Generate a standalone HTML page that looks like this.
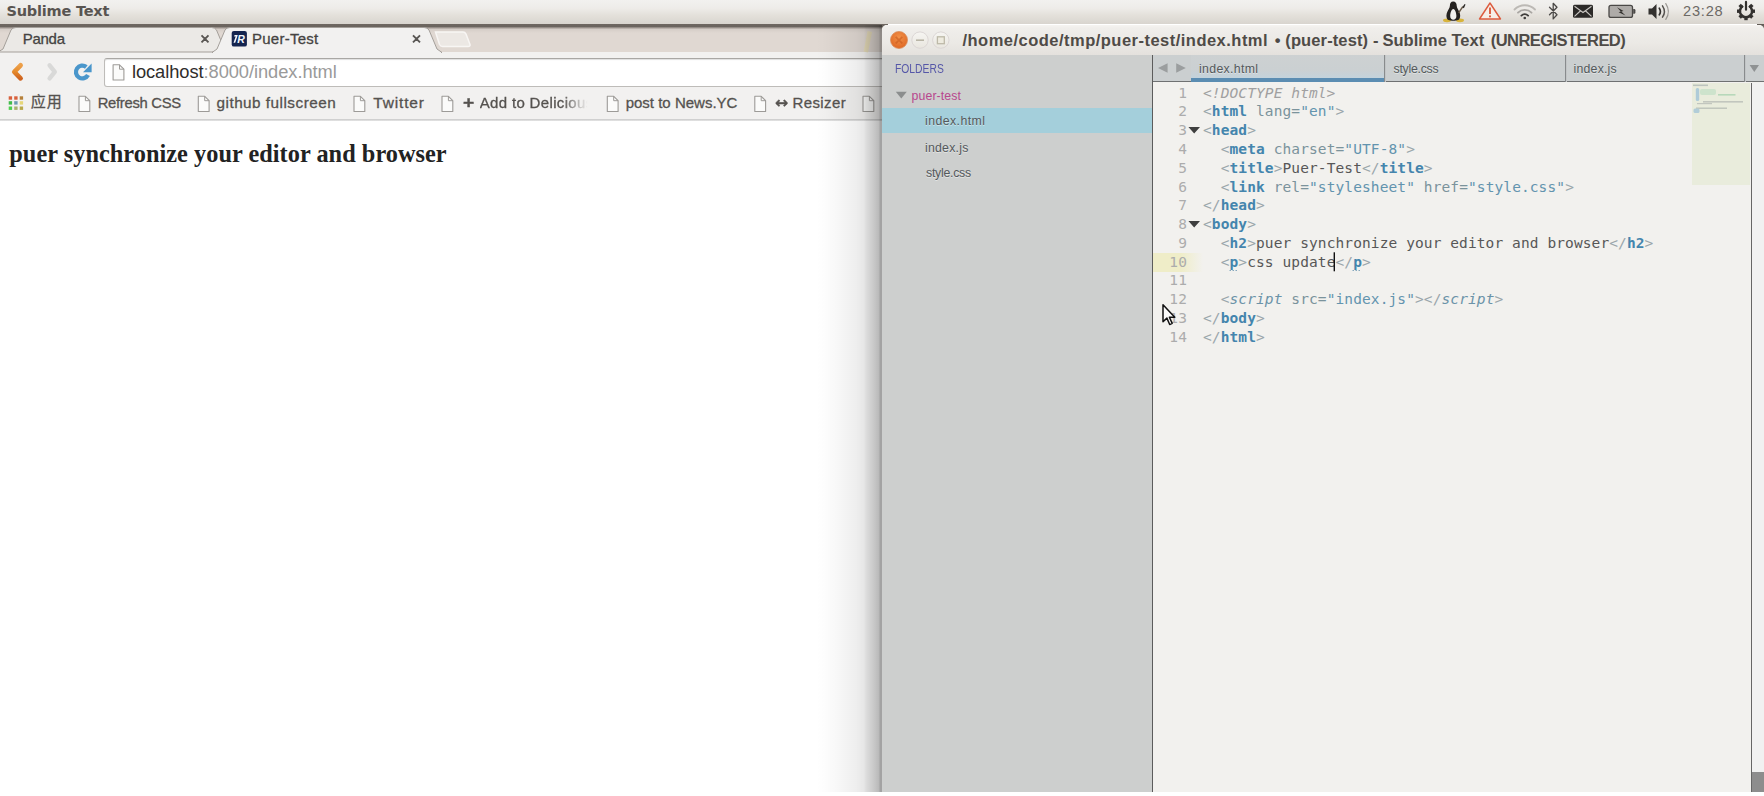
<!DOCTYPE html>
<html lang="en">
<head>
<meta charset="UTF-8">
<title>Puer-Test</title>
<style>
*{box-sizing:border-box;margin:0;padding:0}
html,body{width:1764px;height:796px;overflow:hidden;background:#fff}
body{position:relative;font-family:"Liberation Sans","Noto Sans CJK SC",sans-serif;color:#3c3c3c}
.abs{position:absolute}
svg{position:absolute;overflow:visible}
/* top panel */
#panel{left:0;top:0;width:1764px;height:24.3px;background:linear-gradient(#f2f1ef 0,#eeece9 8px,#e4e1db 15px,#d8d4ce 24.3px)}
/* chrome */
#chrome{left:0;top:25px;width:888px;height:771px;background:#fff}
#tabstrip{left:0;top:-1px;width:888px;height:28px;background:linear-gradient(#6e6761 0,#6b645e 2.6px,#a89f99 3.9px,#d6cec8 5.4px,#e0d8d2 9px,#e0d8d2 100%)}
#toolbar{left:0;top:27px;width:882px;height:67px;background:#f2f1f0}
#tbline{left:0;top:93.6px;width:882px;height:2px;background:linear-gradient(#c9c9c9,#e6e6e6)}
#urlbox{left:104px;top:33px;width:790px;height:29px;background:#fff;border:1px solid #bebcb9;border-top-color:#a9a7a4;border-radius:3px;box-shadow:inset 0 1px 1px rgba(0,0,0,.13)}
#txt div,#txt h2{position:absolute;white-space:nowrap;transform-origin:0 0}
#url span{color:#9a9a9a}
/* shadow */
#shadow{left:816px;top:25px;width:66px;height:767px;background:linear-gradient(to right,rgba(0,0,0,0) 0,rgba(0,0,0,.008) 8px,rgba(0,0,0,.027) 20px,rgba(0,0,0,.067) 40px,rgba(0,0,0,.098) 48px,rgba(0,0,0,.135) 50px,rgba(0,0,0,.215) 58px,rgba(0,0,0,.273) 63px,rgba(0,0,0,.36) 64px,rgba(0,0,0,.36) 66px)}
/* sublime */
#subl{left:882px;top:24.5px;width:882px;height:767.5px;background:#f2f1ee;border-radius:5px 5px 0 0;overflow:hidden}
#sin{left:0;top:.5px;width:882px;height:767px}
#titlebar{left:0;top:-.5px;width:882px;height:30.5px;background:linear-gradient(#f6f4f1 0,#f0eeeb 3px,#ebe9e5 18px,#e4e1dd 100%)}
#sidebar{left:0;top:30px;width:270px;height:737px;background:#cdcfce}
#sidediv{left:270px;top:30px;width:1px;height:737px;background:#5c5c5c}
#sel{left:0;top:83px;width:270px;height:25px;background:#a4cfdb}
#tabbar{left:271px;top:30px;width:611px;height:27px;background:#cbcfd0;border-bottom:1px solid #6f7172}
#acttab{left:309px;top:30px;width:193px;height:27px;background:linear-gradient(#cdd1d2 0,#cbd0d2 55%,#bfd4e1 100%)}
#actline{left:309px;top:53px;width:193px;height:4px;background:#5b8db2}
.tdiv{top:30px;width:2px;height:27px;background:linear-gradient(to right,#6b6e70,#dfe2e3)}
#editor{left:271px;top:58px;width:611px;height:709px;background:#f2f1ee}
#code{--lh:18.77px;left:0;top:0.7px;font:14.5px/18.77px "DejaVu Sans Mono","Liberation Mono",monospace;color:#575757;white-space:pre;letter-spacing:0.1px}
.ln{position:absolute;left:0;width:34px;text-align:right;color:#acacac;height:18.77px}
.cl{position:absolute;left:50px;height:18.77px}
.p{color:#9aa6ab}
.t{color:#4485ad;font-weight:bold}
.a{color:#7b939c}
.s{color:#6394ae}
.c{color:#a0a0a0;font-style:italic}
.i{font-style:italic;font-weight:normal;color:#6b93a8}
#curln{left:0;top:170.3px;width:50px;height:18.7px;background:linear-gradient(to right,#efedc8 0,#efedc8 55%,#f2f1ee 100%)}
#minimap{left:539px;top:0;width:58px;height:102px;background:#e9ecdc}
#sbar{left:869px;top:58px;width:13px;height:709px;background:#f1f1f1;border-left:1px solid #666}
#thumb{left:870px;top:747px;width:12px;height:20px;background:#8d8d8d}
</style>
</head>
<body>
<!-- ================= Chrome window ================= -->
<div id="chrome" class="abs">
  <div id="tabstrip" class="abs"></div>
  <div id="toolbar" class="abs"></div>
  <div id="tbline" class="abs"></div>
  <svg id="tabs" style="left:0;top:0" width="882" height="28" viewBox="0 0 882 28">
    <path d="M-2 27 L3 24 L11 5 Q12.5 2.5 16 2.5 L211.5 2.5 Q215 2.5 216.5 5 L224.5 24 L229 27 Z" fill="#ebe9e6" stroke="#a49f9a" stroke-width="1"/>
    <path d="M435.500 7 L463 7 Q465 7 466 9 L470 19.500 Q470.500 21.500 468 21.500 L442.500 21.500 Q440.500 21.500 439.500 19.500 Z" fill="#ece8e4" stroke="#f8f6f4" stroke-width="1.500"/>
    <path d="M212 27.5 L217 24 L225 5 Q226.5 2.5 230 2.5 L424 2.5 Q427.5 2.5 429 5 L437 24 L442 27.5 Z" fill="#f2f1f0" stroke="#a49f9a" stroke-width="1"/>
    <rect x="213" y="27" width="228" height="1.5" fill="#f2f1f0"/>
  </svg>
  <div id="urlbox" class="abs"></div>
</div>
<svg id="cicons" style="left:0;top:0" width="882" height="130" viewBox="0 0 882 130">
  <defs>
    <linearGradient id="gback" x1="0" y1="0" x2="0" y2="1"><stop offset="0" stop-color="#eda04a"/><stop offset=".5" stop-color="#e58a2c"/><stop offset="1" stop-color="#cf6420"/></linearGradient>
  </defs>
  <path d="M869.800 31.500 L865.800 52" stroke="#eadfb0" stroke-width="4.500" opacity=".7"/>
  <!-- tab close -->
  <path d="M201.500 35.300 l7 7 m0 -7 l-7 7 M413 35.300 l7 7 m0 -7 l-7 7" stroke="#595653" stroke-width="1.900" fill="none"/>
  <!-- favicon -->
  <rect x="231.700" y="30.900" width="15.200" height="15.700" rx="2.200" fill="#14244f"/>
  <path d="M234.600 35 h3.200 l-2.600 7.800 h-1.700 l2.200 -6.400 h-1.600z" fill="#f3f6fb"/>
  <text x="237.300" y="42.900" font-family="Liberation Sans,sans-serif" font-weight="bold" font-style="italic" font-size="10.500" fill="#f3f6fb">R</text>
  <!-- back / forward / reload -->
  <path d="M20.600 65.300 L14.300 71.800 L20.600 78.300" fill="none" stroke="url(#gback)" stroke-width="4.700" stroke-linecap="round" stroke-linejoin="round"/>
  <path d="M49.600 65.300 L54.800 71.800 L49.600 78.300" fill="none" stroke="#d9d9d8" stroke-width="4.400" stroke-linecap="round" stroke-linejoin="round"/>
  <path d="M86.300 67 A6.400 6.400 0 1 0 88 75" fill="none" stroke="#4a96cb" stroke-width="4.300"/>
  <path d="M91.600 63.600 v8.600 h-8.600z" fill="#4a96cb"/>
  <!-- url page icon -->
  <path d="M113.1 64.8 h6.400 l4.400 4.400 v10.800 h-10.800z" fill="#fbfbfa" stroke="#9d9b98" stroke-width="1.100" stroke-linejoin="round"/><path d="M119.5 64.8 v4.400 h4.400" fill="none" stroke="#9d9b98" stroke-width="1"/>
  <!-- apps -->
  <rect x="8.7" y="96.3" width="3.400" height="3.400" fill="#d8603c"/><rect x="14.2" y="96.3" width="3.400" height="3.400" fill="#d8603c"/><rect x="19.7" y="96.3" width="3.400" height="3.400" fill="#b6803a"/><rect x="8.7" y="101.2" width="3.400" height="3.400" fill="#3fbb4a"/><rect x="14.2" y="101.2" width="3.400" height="3.400" fill="#6a9ab0"/><rect x="19.7" y="101.2" width="3.400" height="3.400" fill="#e6d678"/><rect x="8.7" y="106.5" width="3.400" height="3.400" fill="#4fcf4f"/><rect x="14.2" y="106.5" width="3.400" height="3.400" fill="#a7b070"/><rect x="19.7" y="106.5" width="3.400" height="3.400" fill="#b8a84a"/>
  <!-- bookmark page icons -->
  <path d="M79.0 96.3 h6.400 l4.400 4.400 v10.800 h-10.800z" fill="#fbfbfa" stroke="#9d9b98" stroke-width="1.100" stroke-linejoin="round"/><path d="M85.4 96.3 v4.400 h4.400" fill="none" stroke="#9d9b98" stroke-width="1"/><path d="M198.3 96.3 h6.400 l4.400 4.400 v10.800 h-10.800z" fill="#fbfbfa" stroke="#9d9b98" stroke-width="1.100" stroke-linejoin="round"/><path d="M204.7 96.3 v4.400 h4.400" fill="none" stroke="#9d9b98" stroke-width="1"/><path d="M354.0 96.3 h6.400 l4.400 4.400 v10.800 h-10.800z" fill="#fbfbfa" stroke="#9d9b98" stroke-width="1.100" stroke-linejoin="round"/><path d="M360.4 96.3 v4.400 h4.400" fill="none" stroke="#9d9b98" stroke-width="1"/><path d="M442.0 96.3 h6.400 l4.400 4.400 v10.800 h-10.800z" fill="#fbfbfa" stroke="#9d9b98" stroke-width="1.100" stroke-linejoin="round"/><path d="M448.4 96.3 v4.400 h4.400" fill="none" stroke="#9d9b98" stroke-width="1"/><path d="M607.3 96.3 h6.400 l4.400 4.400 v10.800 h-10.800z" fill="#fbfbfa" stroke="#9d9b98" stroke-width="1.100" stroke-linejoin="round"/><path d="M613.7 96.3 v4.400 h4.400" fill="none" stroke="#9d9b98" stroke-width="1"/><path d="M754.8 96.3 h6.400 l4.400 4.400 v10.800 h-10.800z" fill="#fbfbfa" stroke="#9d9b98" stroke-width="1.100" stroke-linejoin="round"/><path d="M761.2 96.3 v4.400 h4.400" fill="none" stroke="#9d9b98" stroke-width="1"/><path d="M863.0 96.3 h6.400 l4.400 4.400 v10.800 h-10.800z" fill="#fbfbfa" stroke="#9d9b98" stroke-width="1.100" stroke-linejoin="round"/><path d="M869.4 96.3 v4.400 h4.400" fill="none" stroke="#9d9b98" stroke-width="1"/>
</svg>
<div id="shadow" class="abs"></div>
<div class="abs" style="left:1757px;top:24.3px;width:7px;height:7px;background:linear-gradient(#5f5954,#8a847e)"></div>
<!-- ================= Sublime window ================= -->
<div id="subl" class="abs"><div id="sin" class="abs">
  <div id="titlebar" class="abs"></div>
  <div id="sidebar" class="abs"></div>
  <div id="sel" class="abs"></div>
  <div id="sidediv" class="abs"></div>
  <div id="tabbar" class="abs"></div>
  <div id="acttab" class="abs"></div>
  <div id="actline" class="abs"></div>
  <div class="abs tdiv" style="left:502px"></div>
  <div class="abs tdiv" style="left:683px"></div>
  <div class="abs tdiv" style="left:862px"></div>
  <div id="editor" class="abs">
    <div id="curln" class="abs"></div>
    <div id="minimap" class="abs"></div>
    <div id="code" class="abs">
<div class="ln" style="top:calc(var(--lh)*0)">1</div><div class="cl" style="top:calc(var(--lh)*0)"><span class="c">&lt;!DOCTYPE html&gt;</span></div>
<div class="ln" style="top:calc(var(--lh)*1)">2</div><div class="cl" style="top:calc(var(--lh)*1)"><span class="p">&lt;</span><span class="t">html</span> <span class="a">lang=</span><span class="s">"en"</span><span class="p">&gt;</span></div>
<div class="ln" style="top:calc(var(--lh)*2)">3</div><div class="cl" style="top:calc(var(--lh)*2)"><span class="p">&lt;</span><span class="t">head</span><span class="p">&gt;</span></div>
<div class="ln" style="top:calc(var(--lh)*3)">4</div><div class="cl" style="top:calc(var(--lh)*3)">  <span class="p">&lt;</span><span class="t">meta</span> <span class="a">charset=</span><span class="s">"UTF-8"</span><span class="p">&gt;</span></div>
<div class="ln" style="top:calc(var(--lh)*4)">5</div><div class="cl" style="top:calc(var(--lh)*4)">  <span class="p">&lt;</span><span class="t">title</span><span class="p">&gt;</span>Puer-Test<span class="p">&lt;/</span><span class="t">title</span><span class="p">&gt;</span></div>
<div class="ln" style="top:calc(var(--lh)*5)">6</div><div class="cl" style="top:calc(var(--lh)*5)">  <span class="p">&lt;</span><span class="t">link</span> <span class="a">rel=</span><span class="s">"stylesheet"</span> <span class="a">href=</span><span class="s">"style.css"</span><span class="p">&gt;</span></div>
<div class="ln" style="top:calc(var(--lh)*6)">7</div><div class="cl" style="top:calc(var(--lh)*6)"><span class="p">&lt;/</span><span class="t">head</span><span class="p">&gt;</span></div>
<div class="ln" style="top:calc(var(--lh)*7)">8</div><div class="cl" style="top:calc(var(--lh)*7)"><span class="p">&lt;</span><span class="t">body</span><span class="p">&gt;</span></div>
<div class="ln" style="top:calc(var(--lh)*8)">9</div><div class="cl" style="top:calc(var(--lh)*8)">  <span class="p">&lt;</span><span class="t">h2</span><span class="p">&gt;</span>puer synchronize your editor and browser<span class="p">&lt;/</span><span class="t">h2</span><span class="p">&gt;</span></div>
<div class="ln" style="top:calc(var(--lh)*9)">10</div><div class="cl" style="top:calc(var(--lh)*9)">  <span class="p">&lt;</span><span class="t">p</span><span class="p">&gt;</span>css update<span class="p">&lt;/</span><span class="t">p</span><span class="p">&gt;</span></div>
<div class="ln" style="top:calc(var(--lh)*10)">11</div><div class="cl" style="top:calc(var(--lh)*10)"></div>
<div class="ln" style="top:calc(var(--lh)*11)">12</div><div class="cl" style="top:calc(var(--lh)*11)">  <span class="p">&lt;</span><span class="i">script</span> <span class="a">src=</span><span class="s">"index.js"</span><span class="p">&gt;&lt;/</span><span class="i">script</span><span class="p">&gt;</span></div>
<div class="ln" style="top:calc(var(--lh)*12)">13</div><div class="cl" style="top:calc(var(--lh)*12)"><span class="p">&lt;/</span><span class="t">body</span><span class="p">&gt;</span></div>
<div class="ln" style="top:calc(var(--lh)*13)">14</div><div class="cl" style="top:calc(var(--lh)*13)"><span class="p">&lt;/</span><span class="t">html</span><span class="p">&gt;</span></div>
    </div>
  </div>
  <div id="sbar" class="abs"></div>
  <div id="thumb" class="abs"></div>
</div></div>
<svg id="sicons" style="left:0;top:0" width="1764" height="796" viewBox="0 0 1764 796">
  <defs>
    <radialGradient id="gclose" cx=".5" cy=".35" r=".7"><stop offset="0" stop-color="#f2924a"/><stop offset="1" stop-color="#dd6420"/></radialGradient>
    <linearGradient id="gbtn" x1="0" y1="0" x2="0" y2="1"><stop offset="0" stop-color="#f6f5f2"/><stop offset="1" stop-color="#e9e6df"/></linearGradient>
  </defs>
  <!-- window buttons -->
  <circle cx="899" cy="40" r="8.500" fill="url(#gclose)" stroke="#d9905f" stroke-width=".800"/>
  <path d="M895.700 36.800 l6.600 6.600 m0 -6.600 l-6.600 6.600" stroke="#bf5217" stroke-width="1.700" fill="none" opacity=".5"/>
  <circle cx="920" cy="40.100" r="8.200" fill="url(#gbtn)" stroke="#d9d4d2" stroke-width=".900"/>
  <path d="M916 40.200 h8" stroke="#b9b5a6" stroke-width="1.600"/>
  <circle cx="940.800" cy="40.100" r="8.200" fill="url(#gbtn)" stroke="#d9d4d2" stroke-width=".900"/>
  <rect x="937.400" y="36.800" width="6.900" height="6.900" fill="#eeebdf" stroke="#bdb9a8" stroke-width="1.300"/>
  <!-- sidebar folder triangle -->
  <path d="M895.800 91.800 h11 l-5.500 6.700z" fill="#8b8e8e"/>
  <!-- tab bar arrows -->
  <path d="M1167.600 63.200 v9.600 l-9.600 -4.800z M1176.200 63.200 v9.600 l9.600 -4.800z" fill="#9b9e9f"/>
  <path d="M1749.600 65 h9.400 l-4.700 7z" fill="#8f9293"/>
  <!-- fold arrows -->
  <path d="M1188.400 127.100 h11.600 l-5.800 6.400z M1188.400 221 h11.600 l-5.800 6.400z" fill="#3f3f3f"/>
  <!-- minimap contents -->
  <g opacity=".55">
    <rect x="1693" y="84.500" width="15" height="1.600" fill="#9aa4a6"/>
    <rect x="1695.800" y="88" width="3.400" height="13" rx="1.500" fill="#7fb1d6"/>
    <rect x="1700" y="89" width="16" height="6" rx="2" fill="#9fd3b0" opacity=".7"/>
    <rect x="1718" y="94" width="17.500" height="1.600" fill="#8fc9a0"/>
    <rect x="1703" y="101" width="40" height="1.600" fill="#a3a8a6"/>
    <rect x="1697" y="103" width="15" height="1.200" fill="#a3a8a6"/>
    <rect x="1696" y="107.500" width="31" height="1.400" fill="#9aa19f"/>
    <rect x="1693.500" y="108.500" width="6" height="4.500" rx="1.500" fill="#86b5d6"/>
  </g>
  <!-- caret -->
  <rect x="1333.600" y="252.300" width="1.400" height="19" fill="#111"/>
  <!-- dotted marks under p -->
  <path d="M1229.500 270.500 h8 M1352.500 270.500 h8" stroke="#6d98b3" stroke-width="1" stroke-dasharray="1.500 1.500" opacity=".8"/>
  <!-- mouse cursor -->
  <path d="M1163 304.800 v17 l3.900 -3.700 l2.800 6.400 l2.500 -1.100 l-2.800 -6.200 h5.400z" fill="#fbfbfb" stroke="#111" stroke-width="1.500" stroke-linejoin="round"/>
</svg>
<!-- ================= Top panel ================= -->
<div id="panel" class="abs">
  <svg id="tray" style="left:0;top:0" width="1764" height="25" viewBox="0 0 1764 25">
    <!-- penguin -->
    <g>
      <ellipse cx="1447" cy="20.300" rx="4" ry="1.900" fill="#d8b43c"/>
      <ellipse cx="1460" cy="20.300" rx="4" ry="1.900" fill="#d8b43c"/>
      <path d="M1453.200 1.500 c2.300 0 3.500 1.800 3.500 4.200 c0 2.400 2.300 4.600 3.200 7.800 c.8 3 0 5.800 -1.700 6.600 l-2.200 .3 c-1.800 .5 -3.600 .5 -5.400 0 l-2.200 -.3 c-1.700 -.8 -2.500 -3.600 -1.700 -6.600 c.9 -3.200 3.200 -5.400 3.200 -7.800 c0 -2.400 1 -4.200 3.300 -4.200z" fill="#24211f"/>
      <path d="M1453.300 9 c1.900 0 3.100 4 3.100 7 c0 2.500 -1.400 3.800 -3.100 3.800 s-3.100 -1.300 -3.100 -3.800 c0 -3 1.200 -7 3.100 -7z" fill="#f2f1ee"/>
      <path d="M1458.600 12.800 l4.200 -6.200" stroke="#6a5a48" stroke-width="1.500"/>
      <path d="M1462.300 7.300 l2.300 -3.300 l.9 .6 l-1.600 3.600z" fill="#2b2825"/>
    </g>
    <!-- warning -->
    <path d="M1490 3 L1500.500 19 L1479.500 19 Z" fill="#f6efe9" stroke="#dc5c3f" stroke-width="1.400" stroke-linejoin="round"/>
    <path d="M1490 7.500 v6.500" stroke="#dc5c3f" stroke-width="1.900"/>
    <circle cx="1490" cy="16.400" r="1.050" fill="#dc5c3f"/>
    <!-- wifi -->
    <g fill="none" stroke-linecap="round">
      <path d="M1514.500 9.500 a14.500 14.500 0 0 1 20.500 0" stroke="#bcb9b5" stroke-width="1.800"/>
      <path d="M1518 12.700 a9.700 9.700 0 0 1 13.500 0" stroke="#a9a6a2" stroke-width="1.800"/>
      <path d="M1521.400 15.600 a5 5 0 0 1 6.700 0" stroke="#3f3d3b" stroke-width="1.900"/>
    </g>
    <circle cx="1524.750" cy="18" r="1.300" fill="#3f3d3b"/>
    <!-- bluetooth -->
    <path d="M1549.500 7.300 L1557 14.800 L1553.200 18.900 L1553.200 3.300 L1557 7.300 L1549.500 14.800" fill="none" stroke="#4b4947" stroke-width="1.300" stroke-linejoin="round" stroke-linecap="round"/>
    <!-- mail -->
    <rect x="1573" y="4.800" width="20" height="13" rx="1.500" fill="#2c2a28"/>
    <path d="M1574.500 6.300 L1583 12.500 L1591.500 6.300 M1574.500 16.400 L1580.300 11 M1591.500 16.400 L1585.700 11" fill="none" stroke="#c9c6c2" stroke-width="1.100"/>
    <!-- battery -->
    <rect x="1609" y="5.400" width="23.500" height="12" rx="2" fill="#aeaba8" stroke="#4a4846" stroke-width="1.300"/>
    <path d="M1633.200 9 h1 q1.200 0 1.200 1.200 v2.400 q0 1.200 -1.200 1.200 h-1z" fill="#4a4846"/>
    <path d="M1617 7.300 L1623.500 11 L1621.300 11.600 L1625.500 15.600 L1618.600 12.300 L1620.800 11.500 Z" fill="#34322f"/>
    <!-- volume -->
    <path d="M1648.500 8.500 h3.500 l4.500 -4.500 v15 l-4.500 -4.500 h-3.500z" fill="#33312f"/>
    <g fill="none" stroke-linecap="round">
      <path d="M1659.300 8.200 q2.200 3.300 0 6.600" stroke="#33312f" stroke-width="1.700"/>
      <path d="M1662.500 5.800 q3.800 5.700 0 11.400" stroke="#55524f" stroke-width="1.500"/>
      <path d="M1665.800 3.600 q5.200 7.900 0 15.800" stroke="#9a9793" stroke-width="1.200"/>
    </g>
    <!-- gear / power -->
    <g transform="translate(1746,11.200)">
      <g fill="#33312f">
        <rect x="-1.700" y="-9" width="3.400" height="4" transform="rotate(45)"/>
        <rect x="-1.700" y="-9" width="3.400" height="4" transform="rotate(90)"/>
        <rect x="-1.700" y="-9" width="3.400" height="4" transform="rotate(135)"/>
        <rect x="-1.700" y="-9" width="3.400" height="4" transform="rotate(180)"/>
        <rect x="-1.700" y="-9" width="3.400" height="4" transform="rotate(225)"/>
        <rect x="-1.700" y="-9" width="3.400" height="4" transform="rotate(270)"/>
        <rect x="-1.700" y="-9" width="3.400" height="4" transform="rotate(315)"/>
      </g>
      <path d="M-3.200 -5.200 A6.100 6.100 0 1 0 3.200 -5.200" fill="none" stroke="#33312f" stroke-width="2.600"/>
      <path d="M0 -9.300 V-1.500" stroke="#33312f" stroke-width="2.200" stroke-linecap="round"/>
    </g>
  </svg>
</div>
<div id="txt" class="abs" style="left:0;top:0">
<div id="app" style='left:6.5px;top:1.2px;font:bold 14.5px/20px "DejaVu Sans",sans-serif;color:#595551;letter-spacing:-0.21px'>Sublime Text</div>
<div id="tab1" style='left:22.8px;top:28.8px;font:normal 15px/20px "Liberation Sans",sans-serif;color:#454342;letter-spacing:-0.29px;-webkit-text-stroke:.3px'>Panda</div>
<div id="tab2" style='left:252.0px;top:28.8px;font:normal 15px/20px "Liberation Sans",sans-serif;color:#454342;letter-spacing:0.25px;-webkit-text-stroke:.3px'>Puer-Test</div>
<div id="url" style='left:131.9px;top:62.2px;font:normal 18.3px/20px "Liberation Sans",sans-serif;color:#2f2d2b;letter-spacing:-0.06px'>localhost<span>:8000/index.html</span></div>
<div id="bm0" style='left:30.7px;top:92.3px;font:normal 15px/20px "Liberation Sans","Noto Sans CJK SC",sans-serif;color:#55524f;letter-spacing:1.1px;-webkit-text-stroke:.3px'>应用</div>
<div id="bm1" style='left:97.7px;top:93.3px;font:normal 14.8px/20px "Liberation Sans",sans-serif;color:#55524f;letter-spacing:-0.29px;-webkit-text-stroke:.3px'>Refresh CSS</div>
<div id="bm2" style='left:216.5px;top:93.3px;font:normal 15.3px/20px "Liberation Sans",sans-serif;color:#55524f;letter-spacing:0.49px;-webkit-text-stroke:.3px'>github fullscreen</div>
<div id="bm3" style='left:373.3px;top:93.3px;font:normal 15.5px/20px "Liberation Sans",sans-serif;color:#55524f;letter-spacing:0.82px;-webkit-text-stroke:.3px'>Twitter</div>
<div id="bm4p" style='left:462.7px;top:93.3px;font:bold 16px/20px "Liberation Sans",sans-serif;color:#55524f;transform:scaleX(1.2);-webkit-text-stroke:.3px'>+</div>
<div id="bm4" style='left:479.7px;top:93.3px;font:normal 15px/20px "Liberation Sans",sans-serif;color:#55524f;letter-spacing:0.34px;width:111.3px;overflow:hidden;-webkit-mask-image:linear-gradient(to right,#000 74%,transparent 97%);mask-image:linear-gradient(to right,#000 74%,transparent 97%);-webkit-text-stroke:.3px'>Add to Delicious</div>
<div id="bm5" style='left:625.7px;top:93.3px;font:normal 15px/20px "Liberation Sans",sans-serif;color:#55524f;-webkit-text-stroke:.3px'>post to News.YC</div>
<div id="bm6p" style='left:775.0px;top:93.3px;font:bold 15px/20px "DejaVu Sans",sans-serif;color:#55524f;transform:scaleX(1.045);-webkit-text-stroke:.3px'>↔</div>
<div id="bm6" style='left:792.5px;top:93.3px;font:normal 15px/20px "Liberation Sans",sans-serif;color:#55524f;letter-spacing:0.38px;-webkit-text-stroke:.3px'>Resizer</div>
<div id="title1" style='left:962.5px;top:30.0px;font:bold 16.5px/20px "Liberation Sans",sans-serif;color:#4f4b47;letter-spacing:0.48px'>/home/code/tmp/puer-test/index.html</div>
<div id="title2" style='left:1274.7px;top:30.0px;font:bold 16.5px/20px "Liberation Sans",sans-serif;color:#4f4b47;letter-spacing:0.12px'>• (puer-test) -</div>
<div id="title3" style='left:1382.4px;top:30.0px;font:bold 16.5px/20px "Liberation Sans",sans-serif;color:#4f4b47;letter-spacing:0.04px'>Sublime Text</div>
<div id="title4" style='left:1490.8px;top:30.0px;font:bold 16.5px/20px "Liberation Sans",sans-serif;color:#4f4b47;letter-spacing:-0.55px'>(UNREGISTERED)</div>
<div id="sb0" style='left:894.8px;top:58.9px;font:normal 12.3px/20px "Liberation Sans",sans-serif;color:#5557a8;transform:scaleX(0.84)'>FOLDERS</div>
<div id="sb1" style='left:911.5px;top:85.6px;font:normal 12.3px/20px "Liberation Sans",sans-serif;color:#b8478d;letter-spacing:0.12px'>puer-test</div>
<div id="sb2" style='left:925.0px;top:110.7px;font:normal 12.3px/20px "Liberation Sans",sans-serif;color:#54595c;letter-spacing:0.44px;text-shadow:0 1px 0 rgba(255,255,255,.45)'>index.html</div>
<div id="sb3" style='left:925.0px;top:137.9px;font:normal 12.3px/20px "Liberation Sans",sans-serif;color:#54595c;letter-spacing:0.23px;text-shadow:0 1px 0 rgba(255,255,255,.45)'>index.js</div>
<div id="sb4" style='left:926.0px;top:162.7px;font:normal 12.3px/20px "Liberation Sans",sans-serif;color:#54595c;letter-spacing:-0.25px;text-shadow:0 1px 0 rgba(255,255,255,.45)'>style.css</div>
<div id="st0" style='left:1199.0px;top:58.9px;font:normal 12.3px/20px "Liberation Sans",sans-serif;color:#54595c;letter-spacing:0.33px;text-shadow:0 1px 0 rgba(255,255,255,.45)'>index.html</div>
<div id="st1" style='left:1393.5px;top:58.9px;font:normal 12.3px/20px "Liberation Sans",sans-serif;color:#54595c;letter-spacing:-0.25px;text-shadow:0 1px 0 rgba(255,255,255,.45)'>style.css</div>
<div id="st2" style='left:1573.6px;top:58.9px;font:normal 12.3px/20px "Liberation Sans",sans-serif;color:#54595c;letter-spacing:0.2px;text-shadow:0 1px 0 rgba(255,255,255,.45)'>index.js</div>
<div id="clock" style='left:1683.0px;top:1.2px;font:normal 14.6px/20px "Liberation Sans",sans-serif;color:#6c6965;letter-spacing:0.8px'>23:28</div>
<h2 id="h2" style='left:9.3px;top:139.2px;font:bold 24.3px/30px "Liberation Serif",serif;color:#222;letter-spacing:0.04px'>puer synchronize your editor and browser</h2>
</div>
</body>
</html>
